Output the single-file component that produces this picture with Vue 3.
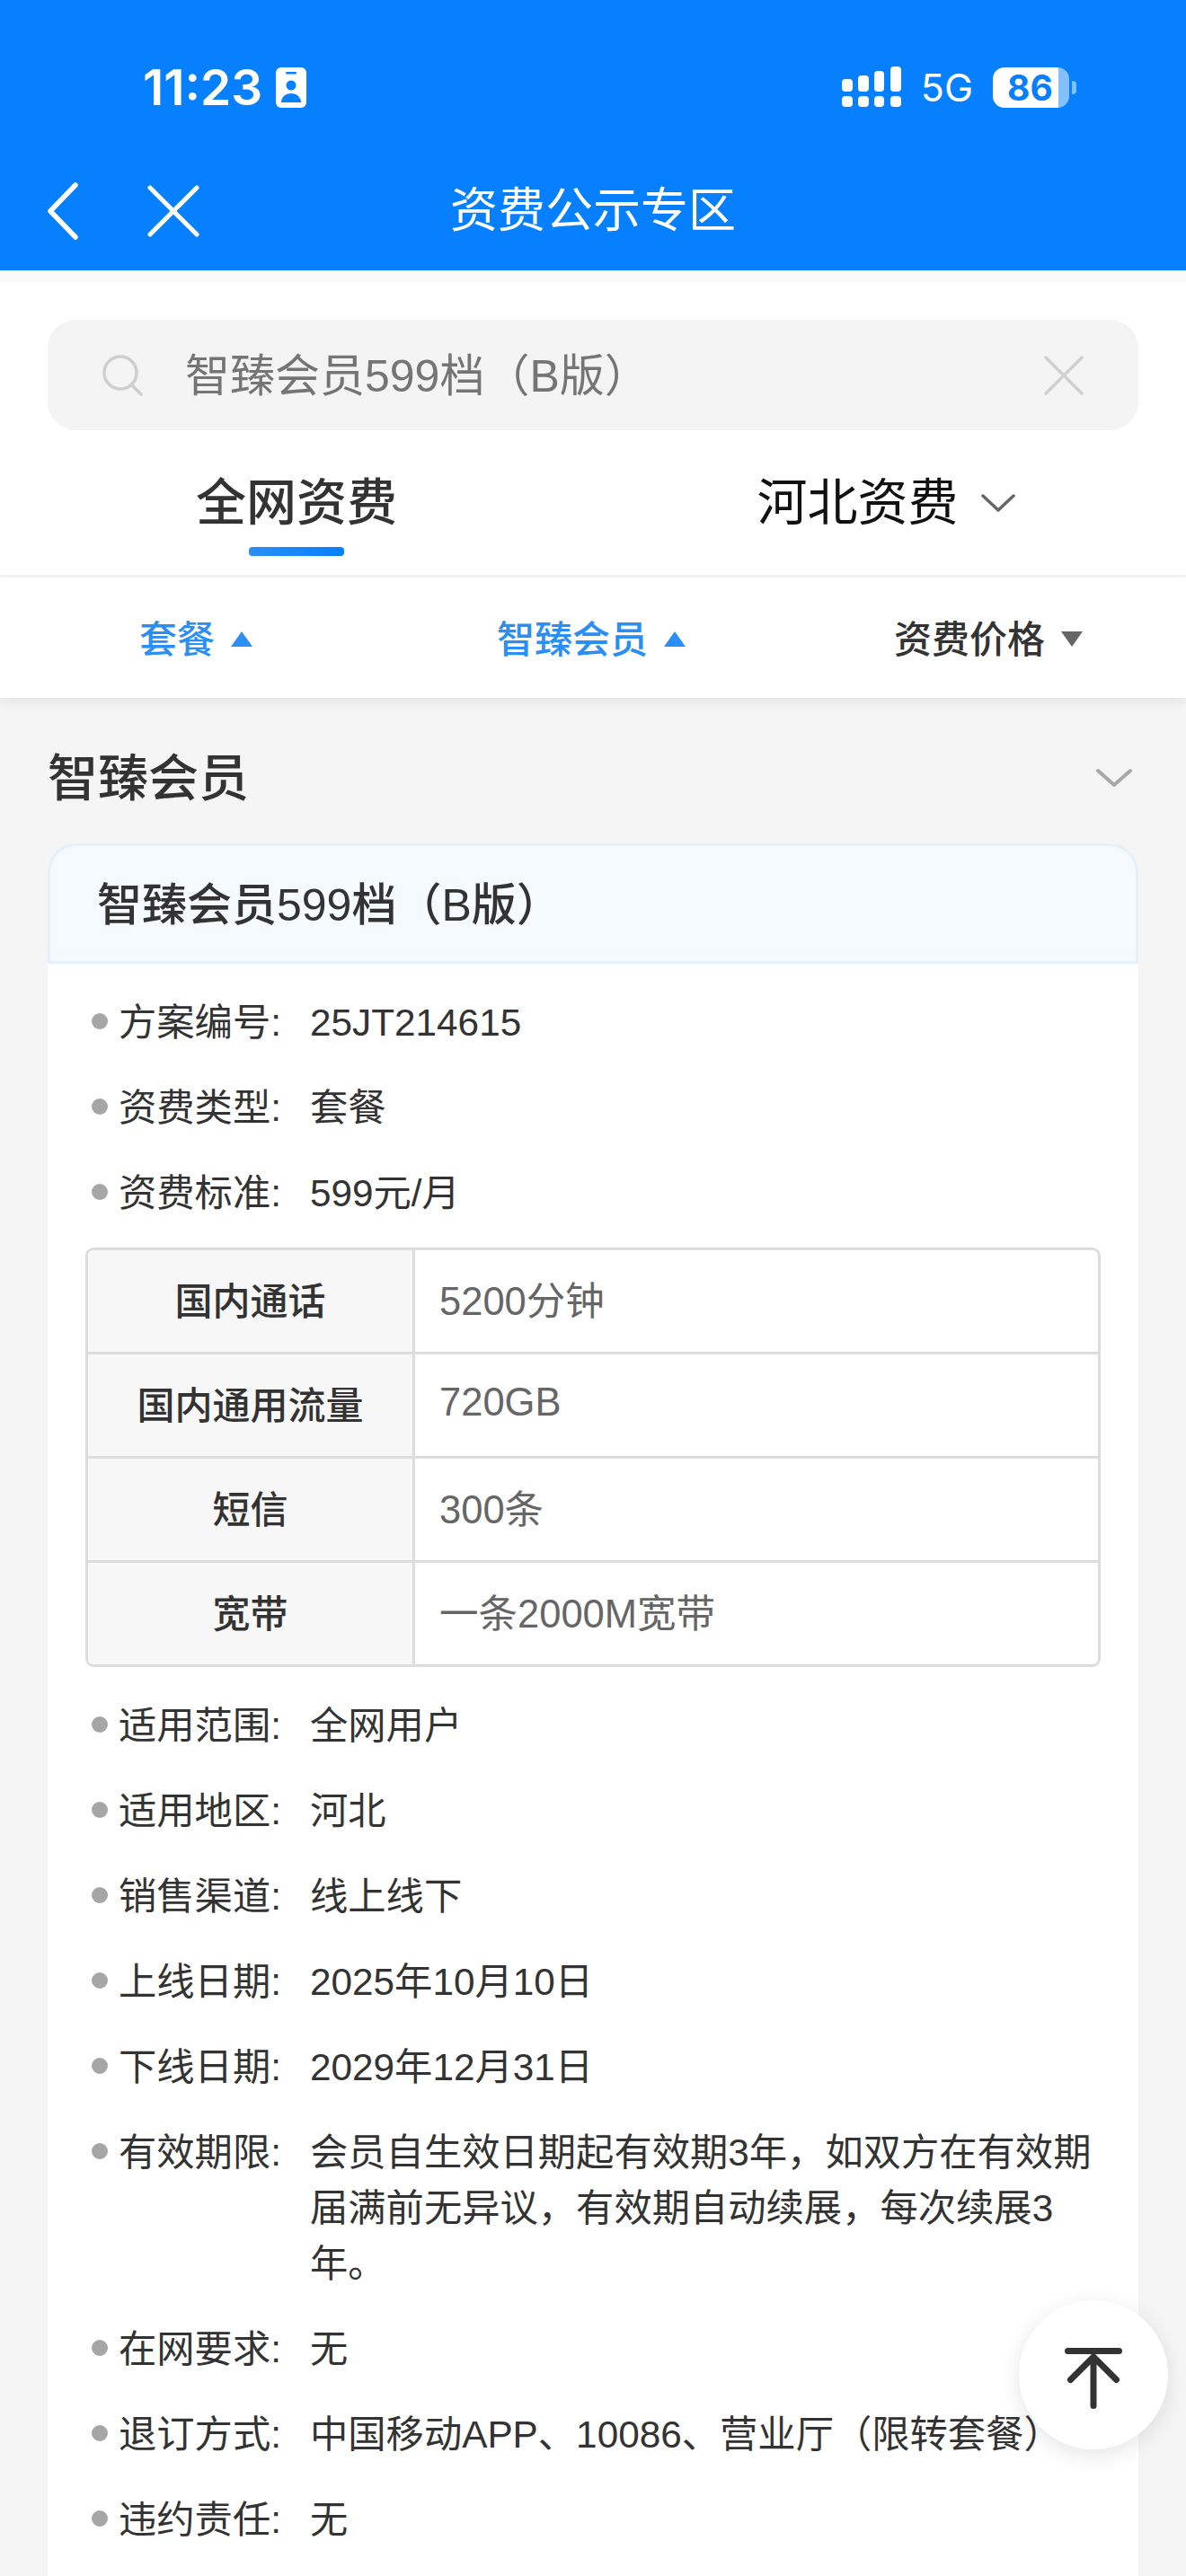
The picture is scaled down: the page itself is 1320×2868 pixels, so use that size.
<template>
  <div class="page">
    <header class="top">
      <div class="status">
        <div class="status-left">
          <span class="time">11:23</span>
          <svg class="badge" viewBox="0 0 34 45">
            <rect width="34" height="45" rx="6" fill="#fff" />
            <rect x="11" y="5" width="12" height="2.5" rx="1.2" fill="#0680ff" />
            <circle cx="17" cy="20" r="5.5" fill="#0680ff" />
            <path d="M6 39c0-6 5-10 11-10s11 4 11 10z" fill="#0680ff" />
          </svg>
        </div>
        <div class="status-right">
          <svg class="signal" viewBox="0 0 66 46">
            <rect x="0" y="14" width="12" height="14" rx="4" fill="#fff" />
            <rect x="18" y="10" width="12" height="18" rx="4" fill="#fff" />
            <rect x="36" y="5" width="11" height="23" rx="4" fill="#fff" />
            <rect x="54" y="0" width="12" height="28" rx="4" fill="#fff" />
            <rect x="0" y="33" width="12" height="12" rx="4" fill="#fff" />
            <rect x="18" y="33" width="12" height="12" rx="4" fill="#fff" />
            <rect x="36" y="33" width="11" height="12" rx="4" fill="#fff" />
            <rect x="54" y="33" width="12" height="12" rx="4" fill="#fff" />
          </svg>
          <span class="net">5G</span>
          <span class="battery">86</span>
        </div>
      </div>
      <nav class="nav">
        <div class="nav-icons">
          <svg class="nav-back" viewBox="0 0 34 64">
            <path d="M31 3 3 32l28 29" fill="none" stroke="#fff" stroke-width="5.5" stroke-linecap="round" stroke-linejoin="round" />
          </svg>
          <svg class="nav-close" viewBox="0 0 58 58">
            <path d="M3 3l52 52M55 3 3 55" fill="none" stroke="#fff" stroke-width="5" stroke-linecap="round" />
          </svg>
        </div>
        <div class="nav-title">资费公示专区</div>
      </nav>
    </header>

    <div class="strip"></div>

    <div class="search-wrap">
      <div class="search">
        <svg class="search-icon" viewBox="0 0 48 46">
          <circle cx="21" cy="20" r="18" fill="none" stroke="#cfcfcf" stroke-width="3.5" />
          <path d="M34 34l10 10" fill="none" stroke="#cfcfcf" stroke-width="3.5" stroke-linecap="round" />
        </svg>
        <span class="search-text">智臻会员599档（B版）</span>
        <svg class="search-clear" viewBox="0 0 44 44">
          <path d="M2 2l40 40M42 2 2 42" fill="none" stroke="#d0d0d0" stroke-width="3.5" stroke-linecap="round" />
        </svg>
      </div>
    </div>

    <div class="tabs">
      <div class="tab active">
        <span>全网资费</span>
        <i class="tab-line"></i>
      </div>
      <div class="tab">
        <span class="tab-row">
          河北资费
          <svg class="tab-arrow" viewBox="0 0 38 20">
            <path d="M2 2l17 16L36 2" fill="none" stroke="#666" stroke-width="3.5" stroke-linecap="round" stroke-linejoin="round" />
          </svg>
        </span>
      </div>
    </div>

    <div class="filters">
      <div v-for="f in filters" :key="f.name" class="filter" :class="{ on: f.on }">
        {{ f.name }}
        <i class="tri"></i>
      </div>
    </div>

    <main class="section">
      <div class="section-head">
        <h2>智臻会员</h2>
        <svg class="section-arrow" viewBox="0 0 40 22">
          <path d="M2 3l18 16L38 3" fill="none" stroke="#a8a8a8" stroke-width="4" stroke-linecap="round" stroke-linejoin="round" />
        </svg>
      </div>

      <section class="card">
        <div class="card-head">智臻会员599档（B版）</div>
        <div class="card-body">
          <div v-for="r in topRows" :key="r.label" class="row">
            <span class="label">{{ r.label }}:</span>
            <span class="value">{{ r.value }}</span>
          </div>

          <div class="spec">
            <div v-for="s in specs" :key="s.name" class="spec-row">
              <div class="spec-name">{{ s.name }}</div>
              <div class="spec-value">{{ s.value }}</div>
            </div>
          </div>

          <div v-for="r in bottomRows" :key="r.label" class="row">
            <span class="label">{{ r.label }}:</span>
            <span class="value">{{ r.value }}</span>
          </div>
        </div>
      </section>
    </main>

    <div class="back-top">
      <svg viewBox="0 0 64 68">
        <path d="M3.500 3.500h57M32 10v54.500M6.500 35.500 32 10l25.500 25.500" fill="none" stroke="#333" stroke-width="7" stroke-linecap="round" stroke-linejoin="round" />
      </svg>
    </div>
  </div>
</template>

<script setup>
const filters = [
  { name: '套餐', on: true },
  { name: '智臻会员', on: true },
  { name: '资费价格', on: false }
]

const topRows = [
  { label: '方案编号', value: '25JT214615' },
  { label: '资费类型', value: '套餐' },
  { label: '资费标准', value: '599元/月' }
]

const specs = [
  { name: '国内通话', value: '5200分钟' },
  { name: '国内通用流量', value: '720GB' },
  { name: '短信', value: '300条' },
  { name: '宽带', value: '一条2000M宽带' }
]

const bottomRows = [
  { label: '适用范围', value: '全网用户' },
  { label: '适用地区', value: '河北' },
  { label: '销售渠道', value: '线上线下' },
  { label: '上线日期', value: '2025年10月10日' },
  { label: '下线日期', value: '2029年12月31日' },
  { label: '有效期限', value: '会员自生效日期起有效期3年，如双方在有效期届满前无异议，有效期自动续展，每次续展3年。' },
  { label: '在网要求', value: '无' },
  { label: '退订方式', value: '中国移动APP、10086、营业厅（限转套餐）' },
  { label: '违约责任', value: '无' }
]
</script>

<style>
html,
body {
  margin: 0;
  background: #f5f5f5;
}
</style>

<style scoped>
.page {
  position: relative;
  width: 1320px;
  height: 2868px;
  overflow: hidden;
  background: #f5f5f5;
  font-family: "Liberation Sans", "Noto Sans CJK SC", sans-serif;
  color: #333;
}

/* 顶部蓝色区域 */
.top {
  height: 301px;
  background: #0680ff;
  color: #fff;
}

.status {
  height: 180px;
  padding: 74px 130px 0 159px;
  box-sizing: border-box;
  display: flex;
  justify-content: space-between;
  align-items: flex-start;
}

.status-left {
  display: flex;
  align-items: center;
  gap: 15px;
  height: 46px;
}

.time {
  font-family: Inter, sans-serif;
  font-size: 55px;
  font-weight: 600;
  line-height: 46px;
}

.badge {
  width: 34px;
  height: 45px;
}

.status-right {
  display: flex;
  align-items: center;
  height: 46px;
}

.signal {
  width: 66px;
  height: 46px;
}

.net {
  margin-left: 22px;
  font-family: Inter, sans-serif;
  font-size: 43px;
  line-height: 46px;
}

.battery {
  position: relative;
  width: 85px;
  height: 45px;
  margin-left: 22px;
  padding-left: 16px;
  box-sizing: border-box;
  border-radius: 13px;
  background: linear-gradient(to right, #fff 86%, rgba(255, 255, 255, 0.5) 86%);
  color: #0680ff;
  font-family: Inter, sans-serif;
  font-size: 39px;
  font-weight: 700;
  line-height: 45px;
}

.battery::after {
  content: "";
  position: absolute;
  left: 88px;
  top: 15px;
  width: 5px;
  height: 15px;
  border-radius: 0 4px 4px 0;
  background: rgba(255, 255, 255, 0.5);
}

.nav {
  height: 110px;
  display: grid;
  grid-template-columns: 1fr auto 1fr;
  align-items: center;
}

.nav-icons {
  display: flex;
  align-items: center;
  gap: 77px;
  padding-left: 53px;
}

.nav-back {
  width: 34px;
  height: 64px;
}

.nav-close {
  width: 58px;
  height: 58px;
}

.nav-title {
  font-size: 53px;
  line-height: 70px;
  white-space: nowrap;
}

.strip {
  height: 13px;
  background: #f9f9f9;
}

/* 搜索框 */
.search-wrap {
  padding: 42px 53px 0;
  background: #fff;
}

.search {
  height: 123px;
  border-radius: 32px;
  background: #f4f4f4;
  display: flex;
  align-items: center;
  padding: 0 61px 0 60px;
}

.search-icon {
  width: 48px;
  height: 46px;
  flex-shrink: 0;
}

.search-text {
  flex: 1;
  margin: -7px 0 0 45px;
  font-size: 50px;
  color: #757575;
}

.search-clear {
  width: 44px;
  height: 44px;
}

/* 资费切换 */
.tabs {
  display: grid;
  grid-template-columns: 1fr 1fr;
  background: #fff;
  height: 161px;
  border-bottom: 3px solid #f5f5f5;
}

.tab {
  display: flex;
  flex-direction: column;
  align-items: center;
  padding: 46px 8px 0 0;
  font-size: 56px;
  line-height: 70px;
  color: #111;
}

.tab.active {
  padding: 46px 0 0;
  color: #333;
  font-weight: 500;
}

.tab-row {
  display: flex;
  align-items: center;
  gap: 25px;
}

.tab-arrow {
  width: 38px;
  height: 20px;
}

.tab-line {
  width: 106px;
  height: 10px;
  margin-top: 14px;
  border-radius: 4px;
  background: linear-gradient(to right, #2b8ef5, #0680ff);
}

/* 筛选条 */
.filters {
  position: relative;
  display: grid;
  grid-template-columns: repeat(3, 1fr);
  align-items: center;
  height: 134px;
  background: #fff;
  box-shadow: 0 4px 12px rgba(0, 0, 0, 0.08);
}

.filter {
  display: flex;
  justify-content: center;
  align-items: center;
  gap: 18px;
  padding: 0 4px 3px 0;
  font-size: 42px;
  font-weight: 500;
  color: #333;
}

.filter:last-child {
  padding-right: 0;
}

.filter.on {
  color: #2b8ef5;
}

.tri {
  width: 0;
  height: 0;
  margin-top: 6px;
  border-left: 12px solid transparent;
  border-right: 12px solid transparent;
  border-top: 17px solid #666;
}

.filter.on .tri {
  border-top: 0;
  border-bottom: 17px solid #2b8ef5;
}

/* 内容 */
.section {
  padding: 0 53px;
}

.section-head {
  height: 162px;
  box-sizing: border-box;
  padding: 16px 7px 0 0;
  display: flex;
  justify-content: space-between;
  align-items: center;
}

.section-head h2 {
  margin: -10px 0 0;
  font-size: 56px;
  font-weight: 500;
  color: #333;
}

.section-arrow {
  width: 40px;
  height: 22px;
}

.card {
  background: #fff;
  border-radius: 32px 32px 0 0;
}

.card-head {
  height: 134px;
  box-sizing: border-box;
  padding-left: 52px;
  border: 3px solid #e3f1fd;
  border-radius: 32px 32px 0 0;
  background: #f4faff;
  font-size: 50px;
  font-weight: 500;
  line-height: 132px;
  color: #333;
}

.card-body {
  padding: 35px 42px 60px;
}

.row {
  position: relative;
  display: flex;
  padding-left: 37px;
  margin-bottom: 33px;
  font-size: 42.3px;
  line-height: 62px;
  color: #333;
}

.row::before {
  content: "";
  position: absolute;
  left: 7px;
  top: 20px;
  width: 18px;
  height: 18px;
  border-radius: 50%;
  background: #a6a6a6;
}

.label {
  width: 213px;
  flex-shrink: 0;
}

.value {
  flex: 1;
}

/* 规格表 */
.spec {
  margin: -4px 0 35px;
  border: 3px solid #ddd;
  border-radius: 9px;
  overflow: hidden;
}

.spec-row {
  display: flex;
  height: 116px;
  box-sizing: border-box;
  border-bottom: 3px solid #ddd;
}

.spec-row:last-child {
  height: 113px;
  border-bottom: 0;
}

.spec-name {
  width: 364px;
  box-sizing: border-box;
  padding-bottom: 7px;
  border-right: 3px solid #ddd;
  background: #f7f7f7;
  display: flex;
  justify-content: center;
  align-items: center;
  font-size: 42px;
  font-weight: 500;
  color: #333;
}

.spec-value {
  flex: 1;
  display: flex;
  align-items: center;
  padding: 0 0 6px 27px;
  font-size: 43.5px;
  color: #666;
}

/* 返回顶部 */
.back-top {
  position: absolute;
  left: 1134px;
  top: 2561px;
  width: 166px;
  height: 166px;
  border-radius: 50%;
  background: #fff;
  box-shadow: 0 6px 24px rgba(0, 0, 0, 0.1);
  display: flex;
  justify-content: center;
  align-items: center;
}

.back-top svg {
  width: 64px;
  height: 68px;
  margin-top: 8px;
}
</style>
